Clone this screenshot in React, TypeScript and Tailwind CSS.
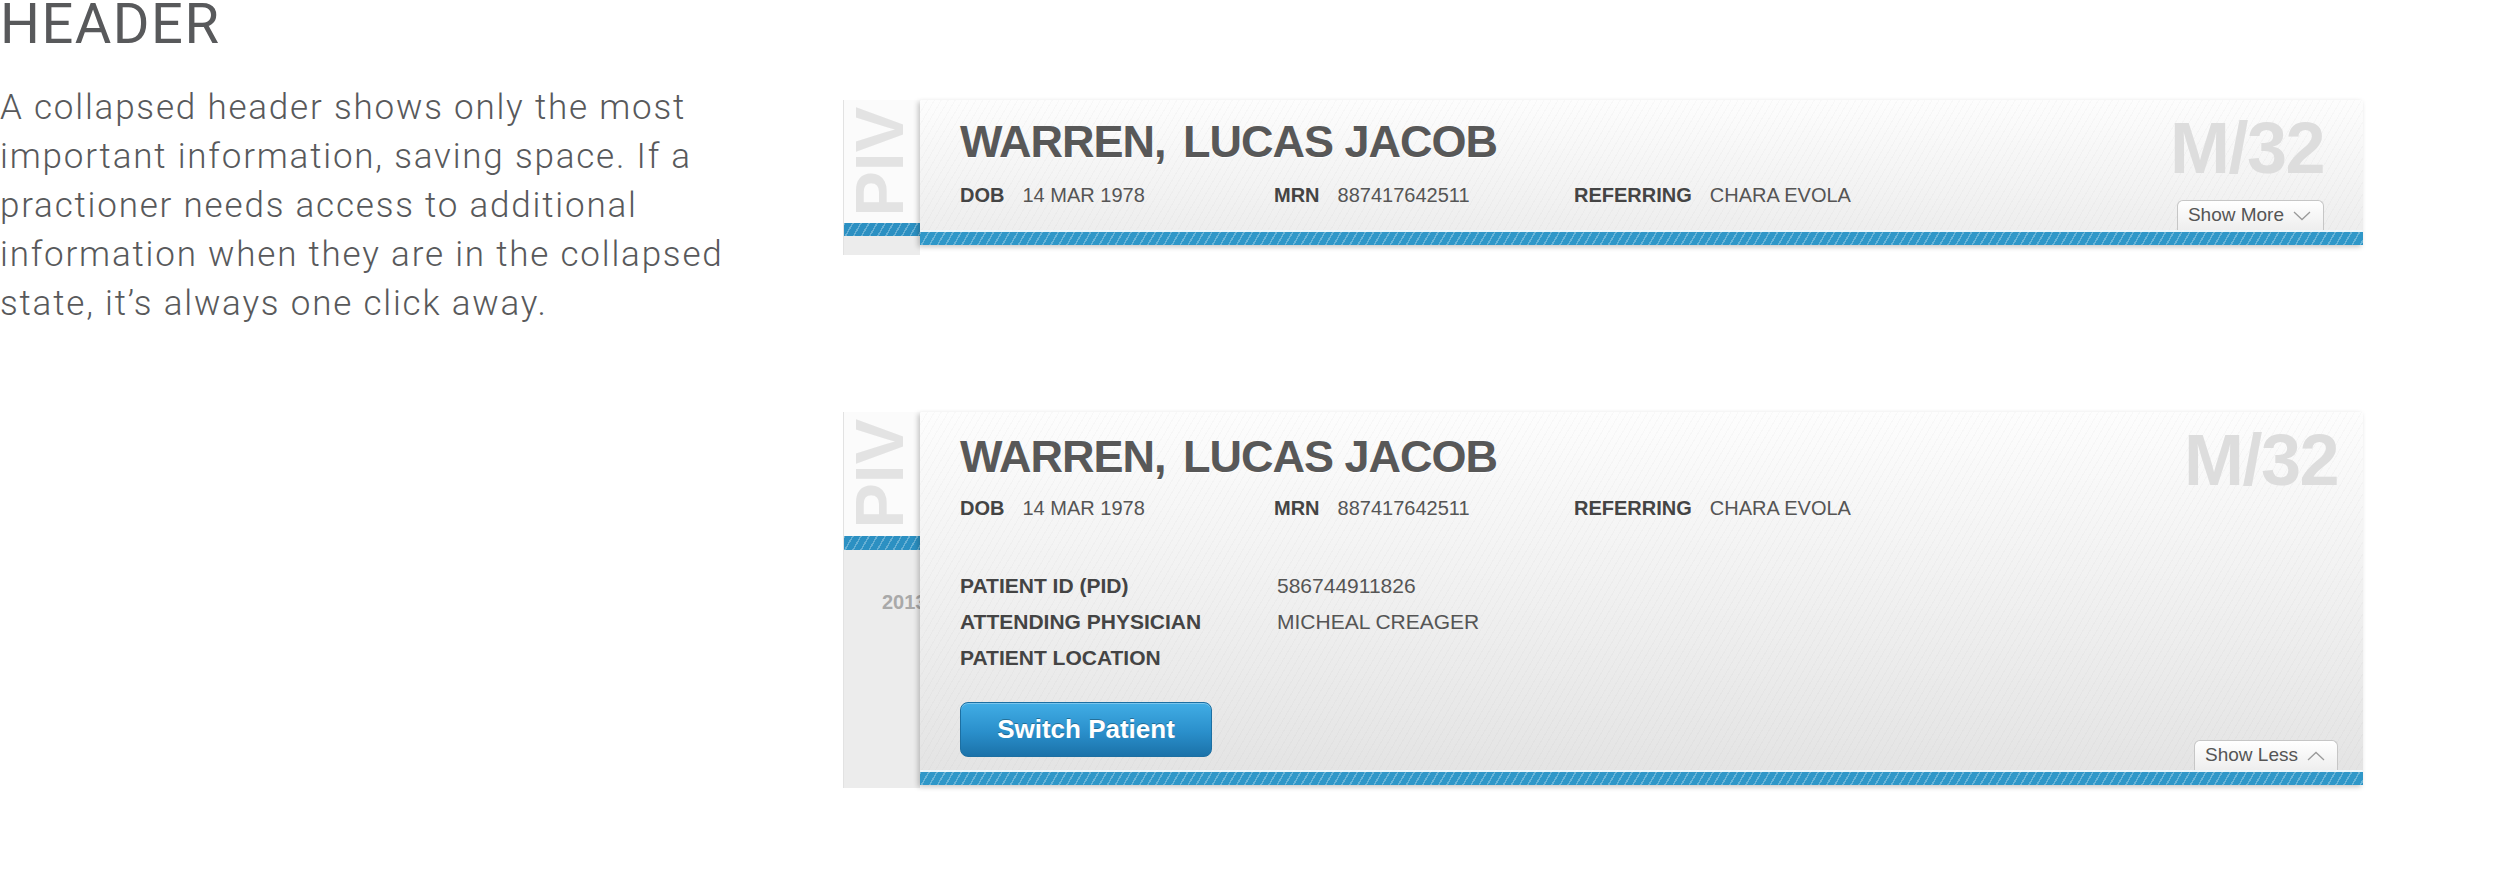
import { FC } from "react";

const sans = "font-['Liberation_Sans',Arial,Helvetica,sans-serif]";

const Chevron: FC<{ up?: boolean }> = ({ up }) => (
  <svg width="18" height="10" viewBox="0 0 18 10" className="shrink-0">
    <polyline
      points={up ? "1,9 9,1.5 17,9" : "1,1 9,8.5 17,1"}
      fill="none"
      stroke="#9a9a9a"
      strokeWidth="1.3"
    />
  </svg>
);

const Field: FC<{ label: string; value: string }> = ({ label, value }) => (
  <div className="flex gap-[18px] whitespace-nowrap">
    <span className="font-bold text-[#444]">{label}</span>
    <span className="text-[#555]">{value}</span>
  </div>
);

// left tab peeking out behind the card
const Strip: FC<{ expanded?: boolean }> = ({ expanded }) => (
  <div className="w-[77px] shrink-0 flex flex-col overflow-hidden border-l border-[#e2e2e2]">
    <div
      className={`flex items-center justify-center pr-[6px] bg-[#fbfbfb] ${
        expanded ? "h-[124px]" : "h-[123px]"
      }`}
    >
      <span className="[writing-mode:vertical-rl] rotate-180 text-[68px] font-bold leading-none text-[#e3e3e3]">
        PIV
      </span>
    </div>
    <div
      className={`bg-[#2c90c2] bg-[image:repeating-linear-gradient(120deg,rgba(255,255,255,0.28)_0px,rgba(255,255,255,0.28)_1.5px,transparent_1.5px,transparent_7px)] ${
        expanded ? "h-[14px]" : "h-[13px]"
      }`}
    />
    <div className={`bg-[#ececec] ${expanded ? "h-[238px] pl-[38px] pt-[42px]" : "h-[19px]"}`}>
      {expanded && (
        <span className="block text-[20px] leading-[20px] font-bold text-[#a9a9a9] whitespace-nowrap">2013</span>
      )}
    </div>
  </div>
);

const PatientCard: FC<{ expanded?: boolean }> = ({ expanded }) => (
  <div
    className={`relative z-10 w-[1443px] flex flex-col shadow-[-2px_2px_5px_rgba(0,0,0,0.22)] ${
      expanded
        ? "bg-[image:repeating-linear-gradient(120deg,rgba(0,0,0,0.02)_0px,rgba(0,0,0,0.02)_1px,transparent_1px,transparent_6px),linear-gradient(to_bottom,#fdfdfd,#e3e3e3)]"
        : "bg-[image:repeating-linear-gradient(120deg,rgba(0,0,0,0.02)_0px,rgba(0,0,0,0.02)_1px,transparent_1px,transparent_6px),linear-gradient(to_bottom,#fdfdfd,#ececec)]"
    }`}
  >
    <div className={`flex ${expanded ? "pr-[25px]" : "h-[130px] pr-[39px]"}`}>
      <div className={`flex-1 pl-[40px] ${expanded ? "pt-[22px] pb-[13px]" : "pt-[19px]"}`}>
        <h1 className="text-[45px] leading-[45px] font-bold tracking-[-1px] text-[#585858] whitespace-nowrap [text-shadow:0_1px_0_#fff]">
          WARREN,<span className="ml-[6px]"> LUCAS JACOB</span>
        </h1>
        <div
          className={`grid grid-cols-[314px_300px_auto] text-[20px] leading-[20px] ${
            expanded ? "mt-[19px]" : "mt-[21px]"
          }`}
        >
          <Field label="DOB" value="14 MAR 1978" />
          <Field label="MRN" value="887417642511" />
          <Field label="REFERRING" value="CHARA EVOLA" />
        </div>

        {expanded && (
          <>
            <div className="mt-[50px] grid grid-cols-[317px_auto] text-[21px] leading-[36px] whitespace-nowrap">
              <span className="font-bold text-[#444]">PATIENT ID (PID)</span>
              <span className="text-[#555]">586744911826</span>
              <span className="font-bold text-[#444]">ATTENDING PHYSICIAN</span>
              <span className="text-[#555]">MICHEAL CREAGER</span>
              <span className="font-bold text-[#444]">PATIENT LOCATION</span>
              <span />
            </div>
            <button className="mt-[26px] w-[252px] h-[55px] rounded-[8px] border border-[#1c6fa2] bg-[image:linear-gradient(to_bottom,#41ade5,#2a8fcb_55%,#1b72a9)] text-[26px] font-bold text-white [text-shadow:0_-1px_0_rgba(0,0,0,0.3)] shadow-[inset_0_1px_0_rgba(255,255,255,0.3)]">
              Switch Patient
            </button>
          </>
        )}
      </div>

      <div className="flex flex-col items-end justify-between pt-[12px]">
        <div className="text-[72px] leading-[72px] font-bold tracking-[-1.5px] text-[#dddddd]">M/32</div>
        <button className="flex items-center gap-[9px] h-[30px] pl-[10px] pr-[12px] rounded-t-[6px] border border-b-0 border-[#c6c6c6] bg-[image:linear-gradient(to_bottom,#ffffff,#eeeeee)] text-[19px] text-[#555]">
          <span>{expanded ? "Show Less" : "Show More"}</span>
          <Chevron up={expanded} />
        </button>
      </div>
    </div>
    <div className="h-[15px] border-t-2 border-white/90 bg-[#2f97c8] bg-[image:repeating-linear-gradient(120deg,rgba(255,255,255,0.28)_0px,rgba(255,255,255,0.28)_1.5px,transparent_1.5px,transparent_7px)]" />
  </div>
);

export default function App() {
  return (
    <div className="w-[2500px] h-[875px] bg-white flex items-start overflow-hidden">
      <div className="w-[843px] shrink-0 font-['Roboto',sans-serif] text-[#58595b]">
        <div className="-mt-[4px] text-[56px] leading-none tracking-[1.5px]">HEADER</div>
        <div className="mt-[31px] text-[35px] leading-[49px] font-light tracking-[1.8px] whitespace-nowrap">
          <div>A collapsed header shows only the most</div>
          <div>important information, saving space. If a</div>
          <div>practioner needs access to additional</div>
          <div>information when they are in the collapsed</div>
          <div>state, it’s always one click away.</div>
        </div>
      </div>

      <div className={`flex flex-col gap-[157px] pt-[100px] ${sans}`}>
        <div className="flex items-start">
          <Strip />
          <PatientCard />
        </div>
        <div className="flex items-start">
          <Strip expanded />
          <PatientCard expanded />
        </div>
      </div>
    </div>
  );
}
